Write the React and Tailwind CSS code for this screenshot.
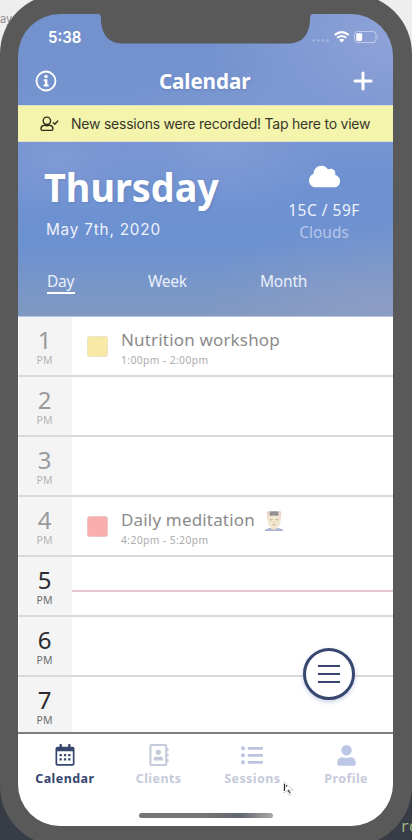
import React from "react";
import { FaCloud, FaRegAddressBook } from "react-icons/fa";

const hours = [
  { h: 1, past: true, title: "Nutrition workshop", time: "1:00pm - 2:00pm", color: "bg-[#f8eaa6]" },
  { h: 2, past: true },
  { h: 3, past: true },
  { h: 4, past: true, title: "Daily meditation", time: "4:20pm - 5:20pm", color: "bg-[#f9afab]", face: true },
  { h: 5, now: true },
  { h: 6 },
  { h: 7 },
];

function InfoIcon() {
  return (
    <svg className="h-[22px] w-[22px]" viewBox="0 0 22 22" fill="none">
      <circle cx="11" cy="11" r="9.5" stroke="#fff" strokeWidth="1.8" />
      <circle cx="11" cy="6.5" r="1.7" fill="#fff" />
      <path d="M8.8 9.3h3.6v5.2h1.2v1.9H8.600v-1.900h1.300v-3.300H8.800z" fill="#fff" />
    </svg>
  );
}

function UserCheckIcon() {
  return (
    <svg className="h-4 w-[19px]" viewBox="0 0 19 16" fill="none" stroke="#2e2f1c" strokeWidth="1.4" strokeLinecap="round" strokeLinejoin="round">
      <circle cx="6.900" cy="4.800" r="3.700" />
      <path d="M4.200 9.200C2.200 9.500 1 10.800 1 12.500v.6c0 .8.5 1.300 1.300 1.300h9.300c.8 0 1.300-.5 1.300-1.300v-.6c0-1.700-1.200-3-3.100-3.300-1.900.7-3.700.7-5.600 0z" />
      <path d="M13.300 6.800l1.500 1.500 3-3.300" />
    </svg>
  );
}

function CalendarIcon() {
  return (
    <svg className="h-[22px] w-5" viewBox="0 0 20 22" fill="#36466f">
      <path fillRule="evenodd" d="M2.500 2.700h2V.8c0-.4.3-.7.7-.7h1c.4 0 .7.3.7.7v1.900h6.200V.8c0-.4.3-.7.7-.7h1c.4 0 .7.3.7.7v1.900h2c1.200 0 2 .8 2 2v15c0 1.200-.8 2-2 2h-15c-1.200 0-2-.8-2-2v-15c0-1.200.8-2 2-2zM2.200 7.200v12.100c0 .4.2.6.6.6h14.400c.4 0 .6-.2.600-.6V7.200z" />
      <path d="M4.500 10h2.300v2.200H4.500zM8.900 10h2.300v2.200H8.900zM13.200 10h2.300v2.200h-2.300zM4.500 14.300h2.300v2.200H4.500zM8.900 14.300h2.300v2.200H8.900zM13.200 14.300h2.300v2.200h-2.300z" />
    </svg>
  );
}

function ListIcon() {
  return (
    <svg className="h-[19px] w-[22px]" viewBox="0 0 22 19" fill="#bcc4df">
      <circle cx="2" cy="2.300" r="2" />
      <circle cx="2" cy="9.300" r="2" />
      <circle cx="2" cy="16.300" r="2" />
      <rect x="6.700" y="1.100" width="15.300" height="2.600" rx="1" />
      <rect x="6.700" y="8.100" width="15.300" height="2.600" rx="1" />
      <rect x="6.700" y="15.100" width="15.300" height="2.600" rx="1" />
    </svg>
  );
}

function ProfileIcon() {
  return (
    <svg className="h-[21px] w-[19px]" viewBox="0 0 19 21" fill="#bcc7e6">
      <circle cx="9.500" cy="5.300" r="5.200" />
      <path d="M5.300 12.200c2.800 1.100 5.600 1.100 8.400 0 2.900.1 4.900 2.300 4.900 5v1.500c0 1.300-.8 2.100-2 2.100H2.400c-1.200 0-2-.8-2-2.100v-1.500c0-2.700 2-4.900 4.900-5z" />
    </svg>
  );
}

function FaceEmoji() {
  return (
    <svg className="h-[21px] w-5" viewBox="0 0 20 21">
      <path d="M.5 21c.3-1.800 3-2.800 6.500-3h6c3.500.2 6.200 1.200 6.500 3z" fill="#a8b5d6" />
      <path d="M7 15h6v4q-3 1.500-6 0z" fill="#eadbc2" />
      <path d="M3.800 2.500h12.700v6H3.800z" fill="#c9c2bc" />
      <ellipse cx="10.100" cy="10.800" rx="6.500" ry="7.800" fill="#f1e7cf" />
      <path d="M6 1.200h8.500l.5 3.300-2 1.500q-3-.8-6 0L5.300 4.500z" fill="#929296" />
      <path d="M2.500 2.500C3 .5 5 .2 5.600 1.200L5 8q-.4 2-1.600 1.500zM17.500 2.500C17 .5 15 .2 14.400 1.200L15 8q.4 2 1.600 1.500z" fill="#f0d8d2" />
      <path d="M5.800 9.500q1.500.8 2.800 0M11.500 9.500q1.500.8 2.800 0" stroke="#a9987f" strokeWidth=".8" fill="none" />
      <path d="M9.500 12.300h1.300" stroke="#d5bd9a" strokeWidth=".8" />
      <path d="M8.500 14.600q1.600.9 3.200 0" stroke="#cf9f8f" strokeWidth=".9" fill="none" />
    </svg>
  );
}

function StatusIcons() {
  return (
    <svg className="h-4 w-[70px]" viewBox="0 0 70 16">
      <g fill="#fff" opacity=".3">
        <circle cx="3.500" cy="12.500" r="1.300" />
        <circle cx="8.200" cy="12.500" r="1.300" />
        <circle cx="12.900" cy="12.500" r="1.300" />
        <circle cx="17.500" cy="12.500" r="1.300" />
      </g>
      <g fill="none" stroke="#fff" strokeWidth="2">
        <path d="M24.600 7q7.100-5.800 14.200 0" />
        <path d="M27.100 9.800q4.600-3.600 9.200 0" />
      </g>
      <path d="M29 11.700q2.700-1.900 5.400 0l-2.700 2.700z" fill="#fff" />
      <rect x="44.500" y="3.500" width="21.500" height="11" rx="3" fill="none" stroke="#fff" strokeOpacity=".45" />
      <rect x="46.200" y="5.200" width="6" height="7.700" rx="1.400" fill="#fff" />
      <path d="M67.300 7.300q1.500 1.600 0 3.400z" fill="#fff" opacity=".5" />
    </svg>
  );
}

function Hour({ item }) {
  return (
    <div className="flex h-[60px] shrink-0 border-b-2 border-[#dadada] bg-white">
      <div className="flex w-[54px] flex-col items-center border-l border-white bg-[#f4f4f4] pr-[2px]">
        <span className={"mt-[9px] text-[24px] leading-[27px] " + (item.past ? "text-[#999a9c]" : "text-[#2b2b31]")}>
          {item.h}
        </span>
        <span className={"mt-px text-[10.500px] leading-[12px] " + (item.past ? "text-[#b4b4b4]" : "text-[#6d6d6f]")}>PM</span>
      </div>
      <div className="flex flex-1">
        {item.title && (
          <>
            <div className={"mt-[19px] ml-[15px] h-[21px] w-[21px] rounded-[3px] border border-[#ddd]/50 " + item.color} />
            <div className="ml-[13px] flex flex-col">
              <div className="mt-[10px] flex h-[26px] items-center">
                <span className="text-[17px] tracking-[0.170px] whitespace-nowrap text-[#8b8b8b]">{item.title}</span>
                {item.face && <span className="ml-[9px]"><FaceEmoji /></span>}
              </div>
              <span className="mt-px text-[10.300px] leading-[13px] tracking-[0.400px] whitespace-nowrap text-[#ababab]">{item.time}</span>
            </div>
          </>
        )}
        {item.now && <div className="mt-[33px] h-[2px] flex-1 bg-[#e9c5ce]" />}
      </div>
    </div>
  );
}

function Tab({ icon, label, active }) {
  return (
    <div className={"flex w-[93.750px] flex-col items-center " + (active ? "text-[#36466f]" : "text-[#c5cadb]")}>
      <div className="mt-[10px] flex h-[22px] items-center justify-center">{icon}</div>
      <span className="mt-[5px] text-[12.500px] leading-4 font-bold tracking-[0.450px]">{label}</span>
    </div>
  );
}

export default function App() {
  return (
    <div className="relative h-[840px] w-[412px] overflow-hidden bg-[linear-gradient(#eeeeef_0_50%,#373c46_50%)] font-['Noto_Sans',sans-serif]">
      <span className="absolute top-[11px] left-0 font-['Inter',sans-serif] text-[11px] leading-4 text-[#8c8c8c]">ay</span>
      <span className="absolute top-[817px] left-[400px] font-['DejaVu_Sans_Mono',monospace] text-[15px] leading-5 text-[#a2b781]">ro</span>

      <div className="absolute -top-[6px] left-0 h-[852px] w-[412px] rounded-[60px] bg-[#595959] pt-5 pr-[19px] pl-[18px]">
        <div className="flex h-[812px] flex-col overflow-hidden rounded-[42px] bg-[radial-gradient(ellipse_110px_60px_at_40px_145px,#869dd6b0_0%,#869dd600_100%),radial-gradient(ellipse_120px_75px_at_205px_130px,#8da2d890_0%,#8da2d800_100%),radial-gradient(ellipse_190px_130px_at_375px_20px,#95a6dad0_0%,#95a6da00_100%),radial-gradient(ellipse_200px_100px_at_375px_302px,#94a0c5b0_0%,#94a0c500_100%),linear-gradient(#7291cd_0px,#7593cf_100px,#6d91d1_190px,#6c91d0_230px,#8099c2_302px)]">
          <div className="flex h-12 items-start justify-between pt-[14px] pr-[13px] pl-[30px]">
            <span className="origin-left scale-x-[0.910] font-['Inter',sans-serif] text-[16.500px] leading-[19px] font-semibold text-white">5:38</span>
            <StatusIcons />
          </div>

          <div className="flex h-[43px] items-center justify-between pr-[20px] pb-[5px] pl-[17px]">
            <InfoIcon />
            <h1 className="scale-x-[0.960] text-[21.500px] leading-7 font-bold tracking-[-0.100px] text-white [text-shadow:0_1px_2px_#4b66a066]">Calendar</h1>
            <svg className="h-5 w-5" viewBox="0 0 20 20" stroke="#fff" strokeWidth="3" strokeLinecap="round">
              <path d="M10 2v16M2 10h16" />
            </svg>
          </div>

          <div className="flex h-[37px] items-center border-y border-[#dfe2c8] bg-[#f4f4ad] pl-[22px]">
            <UserCheckIcon />
            <span className="ml-3 font-['Inter',sans-serif] text-[14px] tracking-[-0.230px] whitespace-nowrap text-[#37382a]">New sessions were recorded! Tap here to view</span>
          </div>

          <div className="flex h-[174px] shrink-0 flex-col text-white">
            <div className="flex h-[120px] justify-between">
              <div className="ml-[26px] flex flex-col">
                <h2 className="mt-[22px] origin-left scale-x-[0.945] text-[40px] leading-[46px] font-bold [text-shadow:1px_1px_3px_#4b66a050]">Thursday</h2>
                <span className="mt-[10px] ml-[2px] font-['Inter',sans-serif] text-[15.300px] leading-5 tracking-[0.800px] text-[#eef2fb]">May 7th, 2020</span>
              </div>
              <div className="mr-[26px] flex w-[86px] flex-col items-center">
                <FaCloud className="mt-[19px] h-[31px] w-[31px]" />
                <span className="mt-[8px] text-[15.500px] leading-[20px] tracking-[0.500px] whitespace-nowrap text-[#eef2fb]">15C / 59F</span>
                <span className="mt-[2px] text-[15.500px] leading-[20px] text-[#b7c6ea]">Clouds</span>
              </div>
            </div>
            <div className="flex text-[15.500px] leading-[22px] text-[#eaf0fb]">
              <span className="mt-[8px] ml-[29px] h-6 w-[28px] border-b-2 border-white tracking-[-0.200px]">Day</span>
              <span className="mt-[8px] ml-[73px] w-[39px] tracking-[-0.300px]">Week</span>
              <span className="mt-[8px] ml-[73px] tracking-[-0.200px]">Month</span>
            </div>
          </div>

          <div className="flex h-[416px] shrink-0 flex-col overflow-hidden border-t border-[#b9c5df] bg-white">
            {hours.map((item) => (
              <Hour key={item.h} item={item} />
            ))}
          </div>

          <div className="flex h-[94px] shrink-0 flex-col border-t-2 border-[#7f7f7f] bg-white">
            <div className="flex">
              <Tab active label="Calendar" icon={<CalendarIcon />} />
              <Tab label="Clients" icon={<FaRegAddressBook className="h-[22px] w-[20px]" />} />
              <Tab label="Sessions" icon={<ListIcon />} />
              <Tab label="Profile" icon={<ProfileIcon />} />
            </div>
            <div className="mt-[26px] h-[5px] w-[134px] self-center rounded-full bg-[linear-gradient(90deg,#757575_0_50%,#626670_75%,#a8a8a8)]" />
          </div>
        </div>
      </div>

      <svg className="absolute top-0 left-[90px] h-[45px] w-[230px]" viewBox="0 0 230 45">
        <path d="M4 14h4q3 0 3 4c0 16 7 25.500 22 25.500H198c15 0 22-9.500 22-25.500q0-4 3-4h4V5H4z" fill="#595959" />
      </svg>

      <div className="absolute top-[648px] left-[303px] flex h-[52px] w-[52px] flex-col items-center justify-center gap-[6px] rounded-full border-[3px] border-[#38476f] bg-white shadow-[0_2px_4px_#7d8fc966]">
        <div className="h-[2px] w-[22px] bg-[#38476f]" />
        <div className="h-[2px] w-[22px] bg-[#38476f]" />
        <div className="h-[2px] w-[22px] bg-[#38476f]" />
      </div>

      <svg className="absolute top-[781px] left-[283px] h-4 w-3" viewBox="0 0 12 16">
        <path d="M1 1v11l3-2.500 2 5 2-1-2-4.500h4z" fill="#fff" stroke="#aaa" strokeWidth=".8" strokeDasharray="1.500 1" />
        <path d="M1.500 3v7M3 4.500l1 1M5 9l2 3" stroke="#222" strokeWidth="1.100" />
      </svg>
    </div>
  );
}
